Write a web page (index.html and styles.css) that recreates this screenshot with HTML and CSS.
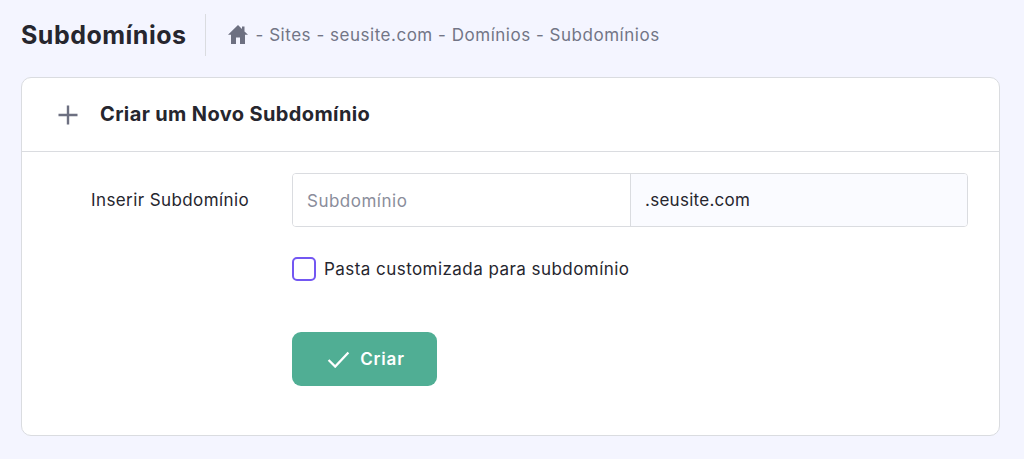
FILE: index.html
```html
<!DOCTYPE html>
<html lang="pt">
<head>
    <meta charset="UTF-8">
    <title>Subdomínios</title>
    <link rel="stylesheet" href="styles.css">
</head>
<body>

<header class="page-header">
    <h1>Subdomínios</h1>
    <nav class="breadcrumb">
        <svg class="home-icon" viewBox="0 0 20 19" width="20" height="19"><path d="M10 0 0 9.8H3V19H8V12.5H12V19H17V9.8H20L16.5 6.4V1.5H14V3.9Z"/></svg>
        <span>- Sites - seusite.com - Domínios - Subdomínios</span>
    </nav>
</header>

<section class="card">
    <div class="card-head">
        <svg class="plus-icon" viewBox="0 0 20 20" width="20" height="20"><path d="M10 0.5V19.5M0.5 10H19.5"/></svg>
        <h2>Criar um Novo Subdomínio</h2>
    </div>
    <form class="card-body">
        <div class="form-row">
            <label for="subdomain">Inserir Subdomínio</label>
            <div class="input-group">
                <input type="text" id="subdomain" placeholder="Subdomínio">
                <span class="suffix">.seusite.com</span>
            </div>
        </div>
        <label class="check-row">
            <span class="checkbox"></span>
            Pasta customizada para subdomínio
        </label>
        <button type="button" class="btn">
            <svg viewBox="0 0 24 18" width="23" height="17"><path d="M1.5 9.5 8.5 16.5 22.5 1.5"/></svg>
            Criar
        </button>
    </form>
</section>

</body>
</html>
```

FILE: styles.css
```css
* {
    margin: 0;
    padding: 0;
    box-sizing: border-box;
}

body {
    font-family: 'Inter', sans-serif;
    background-color: #f4f5ff;
    color: #26262e;
    padding: 14px 24px 24px 21px;
}

.page-header {
    display: flex;
    align-items: center;
    height: 42px;
    margin-bottom: 21px;
}

.page-header h1 {
    font-size: 25px;
    font-weight: 700;
    letter-spacing: 0.5px;
    padding-right: 18px;
    line-height: 42px;
    border-right: 1px solid #dadce0;
}

.breadcrumb {
    display: flex;
    align-items: center;
    gap: 8px;
    margin-left: 22px;
    font-size: 17px;
    letter-spacing: 0.52px;
    color: #727586;
}

.home-icon {
    fill: #6d7081;
    margin-bottom: 2px;
}

.card {
    background-color: white;
    border: 1px solid #dadce0;
    border-radius: 10px;
    height: 359px;
}

.card-head {
    display: flex;
    align-items: center;
    gap: 22px;
    height: 73px;
    padding-left: 36px;
    margin-bottom: 1px;
    box-shadow: 0 1px 0 #dadce0;
}

.card-head h2 {
    font-size: 20px;
    font-weight: 700;
    letter-spacing: 0.38px;
    margin-bottom: 2px;
}

.plus-icon {
    fill: none;
    stroke: #6d7081;
    stroke-width: 2.4;
}

.card-body {
    padding: 21px 31px 0 270px;
}

.form-row {
    position: relative;
}

.form-row label {
    position: absolute;
    left: -201px;
    top: 15px;
    font-size: 17px;
    line-height: 24px;
    letter-spacing: 0.4px;
}

.input-group {
    display: flex;
    height: 54px;
    border: 1px solid #dadce0;
    border-radius: 4px;
    overflow: hidden;
}

.input-group input {
    width: 337px;
    border: none;
    outline: none;
    padding: 1px 14px 0;
    font-family: inherit;
    font-size: 17px;
    letter-spacing: 0.5px;
    color: #26262e;
}

.input-group input::placeholder {
    color: #8a8d9b;
}

.suffix {
    flex: 1;
    display: flex;
    align-items: center;
    padding-left: 14px;
    background-color: #fafbff;
    border-left: 1px solid #dadce0;
    font-size: 17px;
    letter-spacing: 0.27px;
}

.check-row {
    display: flex;
    align-items: center;
    gap: 8px;
    margin-top: 28px;
    font-size: 17px;
    line-height: 28px;
    letter-spacing: 0.45px;
}

.checkbox {
    width: 24px;
    height: 24px;
    border: 2px solid #7357f2;
    border-radius: 5px;
}

.btn {
    display: flex;
    align-items: center;
    justify-content: center;
    gap: 10px;
    width: 145px;
    height: 54px;
    margin-top: 49px;
    padding-left: 3px;
    border: none;
    border-radius: 9px;
    background-color: #50ae94;
    color: white;
    font-family: inherit;
    font-size: 17px;
    font-weight: 600;
    letter-spacing: 0.8px;
}

.btn svg {
    fill: none;
    stroke: white;
    stroke-width: 2.4;
}
```
